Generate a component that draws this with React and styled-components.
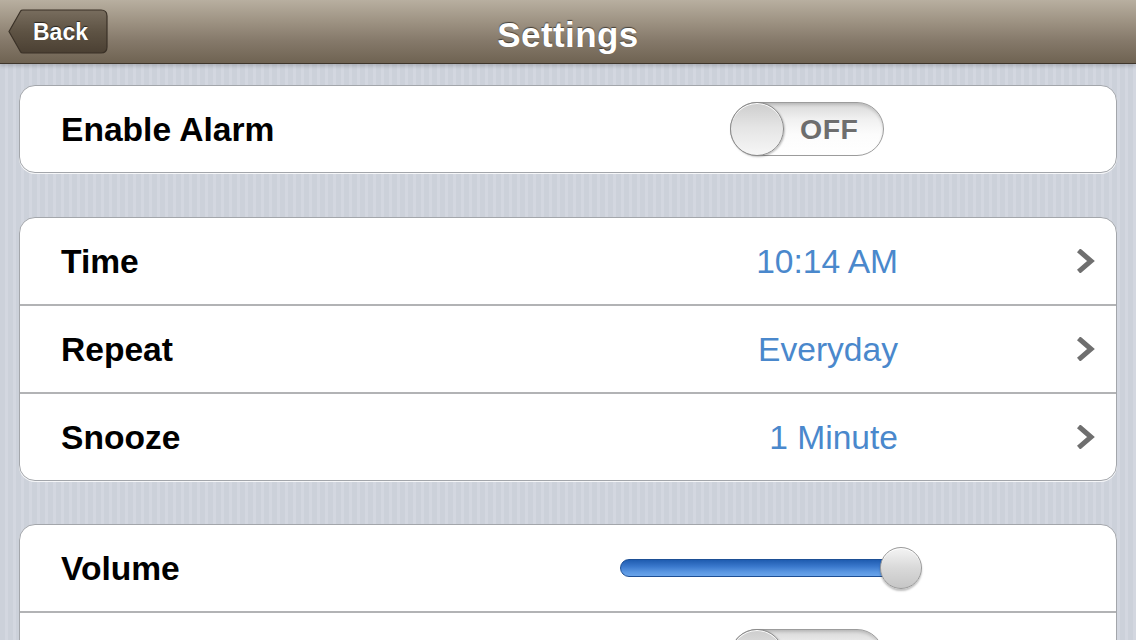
import React from "react";
import styled, { createGlobalStyle } from "styled-components";

const Global = createGlobalStyle`
  html, body { margin: 0; padding: 0; }
  body {
    width: 1136px;
    height: 640px;
    overflow: hidden;
    font-family: "Liberation Sans", Arial, Helvetica, sans-serif;
    background: #cfd3dc;
  }
`;

const Screen = styled.div`
  width: 1136px;
  height: 640px;
  overflow: hidden;
  display: flex;
  flex-direction: column;
  background:
    repeating-linear-gradient(90deg, #ccd1da 0px, #ccd1da 5px, #d3d7e0 5px, #d3d7e0 8px);
`;

const NavBar = styled.header`
  position: relative;
  flex: 0 0 auto;
  height: 63px;
  display: flex;
  align-items: center;
  justify-content: center;
  background: linear-gradient(180deg, #b8afa0 0%, #9d9282 35%, #85796a 65%, #6f6352 100%);
  border-bottom: 1px solid #3f362b;
  box-shadow: 0 2px 4px rgba(0, 0, 0, 0.18);
  z-index: 1;
`;

const Title = styled.h1`
  margin: 0;
  color: #fff;
  font-size: 35px;
  font-weight: 700;
  letter-spacing: 0.4px;
  text-shadow: 0 -1px 1px rgba(0, 0, 0, 0.55);
  line-height: 1;
  margin-top: 6px;
`;

const BackButton = styled.button`
  position: absolute;
  left: 8px;
  top: 9px;
  width: 100px;
  height: 45px;
  padding: 0 0 0 25px;
  border: 0;
  background: transparent;
  display: flex;
  align-items: center;
  color: #fff;
  font-family: inherit;
  font-size: 23px;
  font-weight: 700;
  text-shadow: 0 -1px 1px rgba(0, 0, 0, 0.6);
  cursor: pointer;
`;

const BackShape = styled.svg`
  position: absolute;
  left: 0;
  top: 0;
  z-index: 0;
`;

const BackLabel = styled.span`
  position: relative;
  z-index: 1;
  margin-top: 1px;
`;

const Content = styled.main`
  display: flex;
  flex-direction: column;
  gap: 43.5px;
  padding: 21px 19px 0 19px;
`;

const Group = styled.section`
  background: #fff;
  border: 1px solid #a3a6ab;
  border-radius: 16px;
  box-shadow: 0 1px 0 rgba(255, 255, 255, 0.8);
  overflow: hidden;
`;

const Row = styled.div`
  height: 86px;
  display: flex;
  align-items: center;
  padding: 0 21px 0 41px;
  border-bottom: ${(p) => (p.$last ? "0" : "2px solid #b2b3b5")};
`;

const Label = styled.span`
  flex: 1 1 auto;
  font-size: 33.6px;
  font-weight: 700;
  color: #000;
  margin-top: 2px;
`;

const Value = styled.span`
  font-size: 33.6px;
  color: #4a88cc;
  margin-right: 179px;
  margin-top: 2px;
`;

const ChevronIcon = styled.svg`
  display: block;
  margin-top: 1px;
`;

const Chevron = () => (
  <ChevronIcon width="18" height="24" viewBox="0 0 18 24">
    <path
      d="M3.5 3 L14 12 L3.5 21"
      fill="none"
      stroke="#6f6f6f"
      strokeWidth="5"
      strokeLinecap="square"
      strokeLinejoin="miter"
    />
  </ChevronIcon>
);

const ToggleTrack = styled.div`
  position: relative;
  width: 154px;
  height: 54px;
  box-sizing: border-box;
  border-radius: 27px;
  border: 1px solid #9c9c9c;
  background: linear-gradient(180deg, #d8d8d8 0%, #f0f0f0 30%, #fcfcfc 60%, #ffffff 100%);
  box-shadow: inset 0 2px 3px rgba(0, 0, 0, 0.14);
  margin-right: ${(p) => p.$offset}px;
  display: flex;
  align-items: center;
`;

const ToggleKnob = styled.div`
  position: absolute;
  left: -1px;
  top: -1px;
  width: 54px;
  height: 54px;
  box-sizing: border-box;
  border-radius: 50%;
  border: 1px solid #8a8a8a;
  background: linear-gradient(180deg, #cdcdcd 0%, #e4e4e4 45%, #f6f6f6 100%);
  box-shadow: 1px 1px 2px rgba(0, 0, 0, 0.25), inset 0 1px 0 #fff;
`;

const ToggleText = styled.span`
  margin-left: 69px;
  font-size: 28.5px;
  font-weight: 700;
  color: #6e6e6e;
  letter-spacing: 0.5px;
  text-shadow: 0 1px 0 rgba(255, 255, 255, 0.8);
`;

const Toggle = ({ offset }) => (
  <ToggleTrack $offset={offset}>
    <ToggleKnob />
    <ToggleText>OFF</ToggleText>
  </ToggleTrack>
);

const SliderWrap = styled.div`
  position: relative;
  width: 302px;
  height: 42px;
  margin-right: 173px;
  display: flex;
  align-items: center;
`;

const SliderTrack = styled.div`
  width: 290px;
  height: 18px;
  box-sizing: border-box;
  border-radius: 9px;
  border: 1px solid #1d4f95;
  background: linear-gradient(180deg, #1f5cb0 0%, #3a78cc 40%, #5a97e2 75%, #6aa4ea 100%);
`;

const SliderThumb = styled.div`
  position: absolute;
  right: 0;
  top: 0;
  width: 42px;
  height: 42px;
  box-sizing: border-box;
  border-radius: 50%;
  border: 1px solid #9a9a9a;
  background: linear-gradient(180deg, #f4f4f4 0%, #d9d9d9 50%, #c6c6c6 100%);
  box-shadow: 0 2px 2px rgba(0, 0, 0, 0.25), inset 0 1px 0 #fff;
`;

export default function App() {
  return (
    <>
      <Global />
      <Screen>
        <NavBar>
          <BackButton>
            <BackShape width="100" height="45" viewBox="0 0 100 45">
              <defs>
                <linearGradient id="backGrad" x1="0" y1="0" x2="0" y2="1">
                  <stop offset="0" stopColor="#786d5e" />
                  <stop offset="0.5" stopColor="#5e5344" />
                  <stop offset="1" stopColor="#4b4033" />
                </linearGradient>
              </defs>
              <path
                d="M1 22.5 L12.5 2.2 Q13.3 1 15 1 H93 Q99 1 99 7 V38 Q99 44 93 44 H15 Q13.3 44 12.5 42.8 Z"
                fill="url(#backGrad)"
                stroke="#3a3127"
                strokeWidth="1.2"
              />
            </BackShape>
            <BackLabel>Back</BackLabel>
          </BackButton>
          <Title>Settings</Title>
        </NavBar>
        <Content>
          <Group>
            <Row $last>
              <Label>Enable Alarm</Label>
              <Toggle offset={211} />
            </Row>
          </Group>
          <Group>
            <Row>
              <Label>Time</Label>
              <Value>10:14 AM</Value>
              <Chevron />
            </Row>
            <Row>
              <Label>Repeat</Label>
              <Value>Everyday</Value>
              <Chevron />
            </Row>
            <Row $last>
              <Label>Snooze</Label>
              <Value>1 Minute</Value>
              <Chevron />
            </Row>
          </Group>
          <Group>
            <Row>
              <Label>Volume</Label>
              <SliderWrap>
                <SliderTrack />
                <SliderThumb />
              </SliderWrap>
            </Row>
            <Row $last>
              <Label />
              <Toggle offset={211} />
            </Row>
          </Group>
        </Content>
      </Screen>
    </>
  );
}
